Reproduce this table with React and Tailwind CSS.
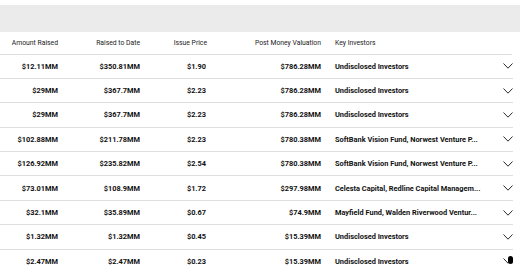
const rows = [
  ["$12.11MM", "$350.81MM", "$1.90", "$786.28MM", "Undisclosed Investors"],
  ["$29MM", "$367.7MM", "$2.23", "$786.28MM", "Undisclosed Investors"],
  ["$29MM", "$367.7MM", "$2.23", "$786.28MM", "Undisclosed Investors"],
  ["$102.88MM", "$211.78MM", "$2.23", "$780.38MM", "SoftBank Vision Fund, Norwest Venture P..."],
  ["$126.92MM", "$235.82MM", "$2.54", "$780.38MM", "SoftBank Vision Fund, Norwest Venture P..."],
  ["$73.01MM", "$108.9MM", "$1.72", "$297.98MM", "Celesta Capital, Redline Capital Managem..."],
  ["$32.1MM", "$35.89MM", "$0.67", "$74.9MM", "Mayfield Fund, Walden Riverwood Ventur..."],
  ["$1.32MM", "$1.32MM", "$0.45", "$15.39MM", "Undisclosed Investors"],
  ["$2.47MM", "$2.47MM", "$0.23", "$15.39MM", "Undisclosed Investors"],
];

function Chevron() {
  return (
    <svg width="10" height="6" viewBox="0 0 10 6" fill="none">
      <polyline points="0.5,0.5 5,5.2 9.5,0.5" stroke="#2a2a2a" strokeWidth="1" />
    </svg>
  );
}

export default function App() {
  return (
    <div className="w-[520px] h-[272px] overflow-hidden bg-white font-['Roboto',sans-serif] text-[#111]">
      <div className="h-[5px]" />
      <div className="h-[27px] bg-[#ebebeb]" />

      {/* Header */}
      <div className="flex items-center h-[22.5px] w-[512px] border-b border-[#dedede] text-[6.8px] text-[#222]">
        <div className="w-[58px] text-right">Amount Raised</div>
        <div className="w-[82px] text-right">Raised to Date</div>
        <div className="w-[67px] text-right">Issue Price</div>
        <div className="w-[114px] text-right">Post Money Valuation</div>
        <div className="ml-[14px]">Key Investors</div>
      </div>

      {/* Rows */}
      {rows.map((r, i) => (
        <div
          key={i}
          className="relative flex items-center h-[24.4px] w-[513px] border-b border-[#dedede] text-[7.4px] font-bold"
        >
          <div className="w-[58px] text-right">{r[0]}</div>
          <div className="w-[82px] text-right">{r[1]}</div>
          <div className="w-[66px] text-right">{r[2]}</div>
          <div className="w-[115px] text-right">{r[3]}</div>
          <div className="ml-[14px] flex-1 whitespace-nowrap">{r[4]}</div>
          <Chevron />
          {i === rows.length - 1 && (
            <div className="absolute right-0 top-[6px] w-[5px] h-[8px] rounded-full bg-black" />
          )}
        </div>
      ))}
    </div>
  );
}
